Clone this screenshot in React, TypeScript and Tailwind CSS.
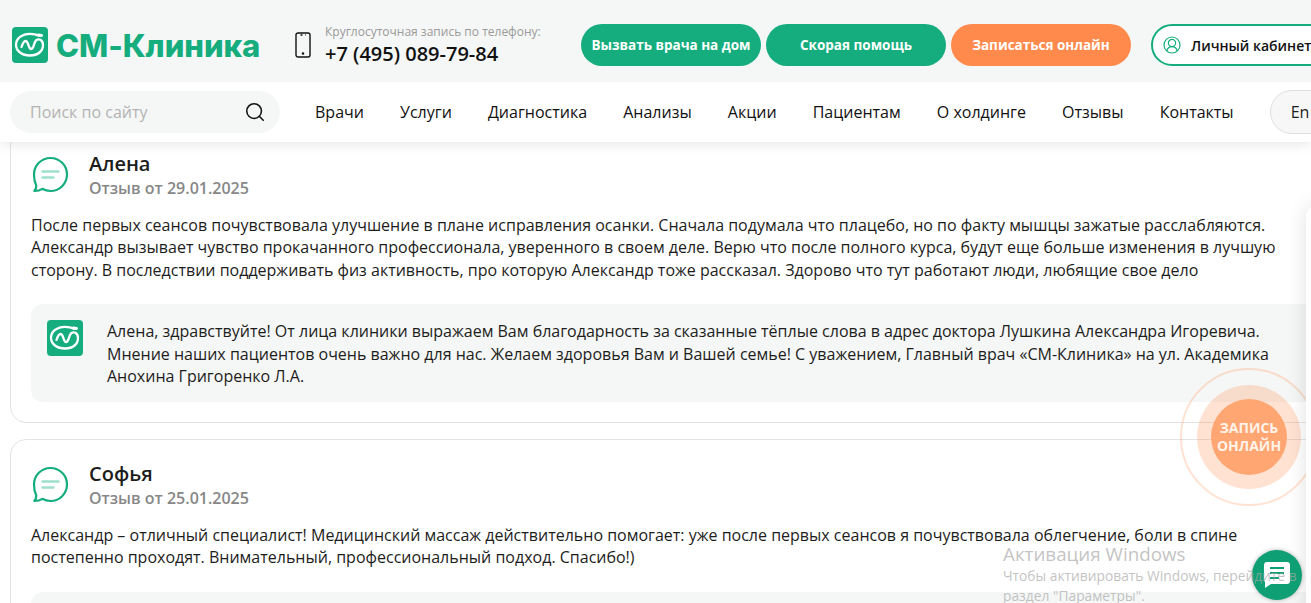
import { Search } from "lucide-react";

const navItems = ["Врачи", "Услуги", "Диагностика", "Анализы", "Акции", "Пациентам", "О холдинге", "Отзывы", "Контакты"];

function LogoMark({ className }: { className: string }) {
  return (
    <span className={`flex shrink-0 items-center justify-center rounded-[4px] bg-[#15ad7e] ${className}`}>
      <svg viewBox="0 0 36 36" className="h-full w-full" fill="none" stroke="#fff" strokeWidth="2.3" strokeLinecap="round" strokeLinejoin="round">
        <path d="M27 8.6 C24 7.2 21.5 6.8 18 6.8 C10 6.8 4 11.5 4 17.8 C4 24 10 28.5 18 28.5 C26 28.5 31 24 31 18 C31 15.5 30 13.8 28.500 12.800 C26 11.800 24 13 23 15 C21.500 18 21.500 22 19 22 C16.500 22 16.500 14 13.500 14 C11.500 14 10.500 17 9.500 20" />
        <path d="M26.500 8 L29.500 8.400" strokeWidth="3" />
      </svg>
    </span>
  );
}

function ChatBubble() {
  return (
    <svg viewBox="0 0 38 38" className="h-[38px] w-[38px] shrink-0" fill="none">
      <path d="M19.500 2C28.600 2 36 9.400 36 18.500S28.600 35 19.500 35c-3 0-5.800-.8-8.200-2.200-2.400 1.600-5 2.300-8 2.200 1.400-1.500 2.100-3.300 2-5.500C3.800 26.600 3 22.700 3 18.500 3 9.400 10.400 2 19.500 2Z" stroke="#15ad7e" strokeWidth="2.200" strokeLinejoin="round" />
      <path d="M11.500 15.500h16M11.500 21.500h11" stroke="#9fe0c9" strokeWidth="2.400" strokeLinecap="round" />
    </svg>
  );
}

function ReviewHead({ name, date }: { name: string; date: string }) {
  return (
    <div className="flex gap-[20px]">
      <div className="pt-[5px]">
        <ChatBubble />
      </div>
      <div>
        <p className="text-[20px] leading-[26px] font-semibold text-[#1d1d1b]">{name}</p>
        <p className="text-[16px] leading-[22px] font-semibold text-[#878787]">{date}</p>
      </div>
    </div>
  );
}

export default function App() {
  return (
    <div className="relative h-[603px] w-[1311px] overflow-hidden bg-white font-['Open_Sans',sans-serif] text-[#1d1d1b]">
      <header className="relative z-10 shadow-[0_2px_12px_rgba(0,0,0,0.1)]">
        <div className="flex h-[82px] items-center bg-[#f5f7f6] pt-[8px] pl-[12px]">
          <div className="flex w-[283px] shrink-0 items-center gap-[8px]">
            <LogoMark className="h-[36px] w-[36px]" />
            <span className="font-['Inter',sans-serif] text-[31px] leading-none font-extrabold tracking-[-0.05px] text-[#15ad7e]">СМ-Клиника</span>
          </div>
          <svg viewBox="0 0 16 26" className="h-[26px] w-[16px] shrink-0" fill="none" stroke="#111" strokeWidth="1.400">
            <rect x="1" y="1" width="14" height="24" rx="2" />
            <path d="M5.500 3h2M10 3h.6" />
            <circle cx="8" cy="21.500" r=".6" fill="#111" />
          </svg>
          <div className="ml-[14px] w-[256px] shrink-0">
            <p className="mt-[1px] text-[12px] leading-[16px] text-[#9a9a9a]">Круглосуточная запись по телефону:</p>
            <p className="text-[20px] leading-[27px] font-semibold text-[#111]">+7 (495) 089-79-84</p>
          </div>
          <div className="flex gap-[5px]">
            <a className="flex h-[42px] w-[180px] items-center justify-center rounded-[21px] bg-[#15ad7e] pt-[1px] text-[13.500px] font-bold text-white">Вызвать врача на дом</a>
            <a className="flex h-[42px] w-[180px] items-center justify-center rounded-[21px] bg-[#15ad7e] pt-[1px] text-[13.500px] font-bold text-white">Скорая помощь</a>
            <a className="flex h-[42px] w-[180px] items-center justify-center rounded-[21px] bg-[#ff8a4c] pt-[1px] text-[13.500px] font-bold text-white">Записаться онлайн</a>
          </div>
          <a className="ml-[20px] flex h-[42px] w-[180px] shrink-0 items-center gap-[10px] rounded-[21px] border-2 border-[#15ad7e] bg-white pl-[10px] text-[14px] font-semibold whitespace-nowrap text-[#111]">
            <svg viewBox="0 0 18 18" className="h-[18px] w-[18px] shrink-0" fill="none" stroke="#15ad7e" strokeWidth="1.200">
              <circle cx="9" cy="9" r="8" />
              <circle cx="9" cy="7" r="3.600" />
              <path d="M3.800 15c.6-2.800 2.600-4.400 5.200-4.400s4.600 1.600 5.200 4.400" />
            </svg>
            Личный кабинет
          </a>
        </div>
        <div className="flex h-[60px] items-center bg-white pl-[10px]">
          <div className="flex h-[42px] w-[270px] shrink-0 items-center justify-between rounded-[21px] bg-[#f5f7f6] pr-[14px] pl-[20px]">
            <span className="text-[16px] text-[#b3b3b3]">Поиск по сайту</span>
            <Search size={22} strokeWidth={1.700} className="text-[#111]" />
          </div>
          <nav className="ml-[35px] flex shrink-0 gap-[36.120px] text-[16px] whitespace-nowrap text-[#111]">
            {navItems.map((item) => (
              <a key={item}>{item}</a>
            ))}
          </nav>
          <span className="ml-[36px] flex h-[44px] w-[80px] shrink-0 items-center rounded-[22px] border border-[#dedede] bg-[#f7f7f7] pl-[20px] text-[16px]">En</span>
        </div>
      </header>

      <main className="w-[1340px] pl-[10px]">
        <section className="-mt-[13px] h-[294px] rounded-[16px] border border-[#e3e3e3] px-[20px] pt-[21px]">
          <ReviewHead name="Алена" date="Отзыв от 29.01.2025" />
          <p className="mt-[15px] w-[1250px] text-[16px] leading-[22.400px]">
            После первых сеансов почувствовала улучшение в плане исправления осанки. Сначала подумала что плацебо, но по факту мышцы зажатые расслабляются. Александр вызывает чувство прокачанного профессионала, уверенного в своем деле. Верю что после полного курса, будут еще больше изменения в лучшую сторону. В последствии поддерживать физ активность, про которую Александр тоже рассказал. Здорово что тут работают люди, любящие свое дело
          </p>
          <div className="mt-[23px] flex h-[98px] gap-[24px] rounded-[12px] bg-[#f5f7f6] pt-[16px] pl-[16px]">
            <LogoMark className="h-[36px] w-[36px]" />
            <p className="w-[1170px] text-[16px] leading-[22.400px]">
              Алена, здравствуйте! От лица клиники выражаем Вам благодарность за сказанные тёплые слова в адрес доктора Лушкина Александра Игоревича. Мнение наших пациентов очень важно для нас. Желаем здоровья Вам и Вашей семье! С уважением, Главный врач «СМ-Клиника» на ул. Академика Анохина Григоренко Л.А.
            </p>
          </div>
        </section>
        <section className="mt-[16px] h-[300px] rounded-[16px] border border-[#e3e3e3] px-[20px] pt-[21px]">
          <ReviewHead name="Софья" date="Отзыв от 25.01.2025" />
          <p className="mt-[15px] w-[1250px] text-[16px] leading-[22.400px]">
            Александр – отличный специалист! Медицинский массаж действительно помогает: уже после первых сеансов я почувствовала облегчение, боли в спине постепенно проходят. Внимательный, профессиональный подход. Спасибо!)
          </p>
          <div className="mt-[23px] h-[60px] rounded-[12px] bg-[#f5f7f6]" />
        </section>
      </main>

      {/* floating booking button, sits under the sidebar card */}
      <div className="absolute top-[368px] left-[1180px] flex h-[138px] w-[138px] items-center justify-center rounded-full border-2 border-[#ff8a4c]/25">
        <div className="flex h-[104px] w-[104px] shrink-0 items-center justify-center rounded-full bg-[#ff8a4c]/25">
          <div className="flex h-[76px] w-[76px] items-center justify-center rounded-full bg-[#ffa672] text-center text-[14px] leading-[18px] font-bold text-[#fff3ea]">
            ЗАПИСЬ<br />ОНЛАЙН
          </div>
        </div>
      </div>

      <div className="absolute top-[205px] left-[1306px] h-[500px] w-[100px] rounded-tl-[12px] bg-white shadow-[0_0_20px_rgba(0,0,0,0.12)]" />

      <div className="absolute top-[550px] left-[1252px] flex h-[50px] w-[50px] items-center justify-center rounded-full bg-[#0e9f74] shadow-[0_0_4px_rgba(0,0,0,0.3)]">
        <svg viewBox="0 0 30 30" className="h-[30px] w-[30px]" fill="#fff">
          <path d="M5 2h20a3 3 0 0 1 3 3v16a3 3 0 0 1-3 3H9l-6 4v-6a3 3 0 0 1-1-2V5a3 3 0 0 1 3-3Z" />
          <path d="M8 8h14M8 13h14M8 18h9" stroke="#0e9f74" strokeWidth="2" />
        </svg>
      </div>

      <div className="absolute top-[543px] left-[1003px] w-[308px] text-[#a8a8a8]/70">
        <p className="text-[18.800px] leading-[22px]">Активация Windows</p>
        <p className="mt-[1px] text-[13.800px] leading-[20px] whitespace-nowrap">Чтобы активировать Windows, перейдите в<br />раздел "Параметры".</p>
      </div>
    </div>
  );
}
